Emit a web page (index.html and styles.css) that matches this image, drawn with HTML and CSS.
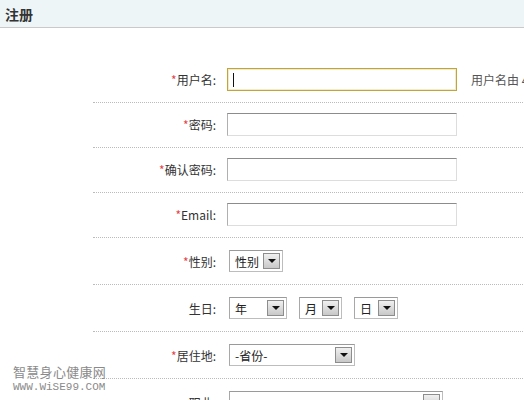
FILE: index.html
```html
<!DOCTYPE html>
<html lang="zh">
<head>
<meta charset="utf-8">
<title>注册</title>
<link rel="stylesheet" href="styles.css">
</head>
<body>
<div class="header"><h1 class="title">注册</h1></div>
<div class="form">
  <div class="row">
    <label class="label"><span class="req">*</span>用户名:</label>
    <div class="field"><span class="input focus"><span class="caret"></span></span><span class="hint">用户名由 4-16 个字符组成</span></div>
  </div>
  <div class="row">
    <label class="label"><span class="req">*</span>密码:</label>
    <div class="field"><span class="input"></span></div>
  </div>
  <div class="row">
    <label class="label"><span class="req">*</span>确认密码:</label>
    <div class="field"><span class="input"></span></div>
  </div>
  <div class="row">
    <label class="label"><span class="req">*</span>Email:</label>
    <div class="field"><span class="input"></span></div>
  </div>
  <div class="row row-sel">
    <label class="label"><span class="req">*</span>性别:</label>
    <div class="field">
      <span class="select w-gender"><span class="sel-text">性别</span><span class="btn"><span class="tri"></span></span></span>
    </div>
  </div>
  <div class="row row-sel">
    <label class="label">生日:</label>
    <div class="field">
      <span class="select w-year"><span class="sel-text">年</span><span class="btn"><span class="tri"></span></span></span>
      <span class="select w-month"><span class="sel-text">月</span><span class="btn"><span class="tri"></span></span></span>
      <span class="select w-day"><span class="sel-text">日</span><span class="btn"><span class="tri"></span></span></span>
    </div>
  </div>
  <div class="row row-sel">
    <label class="label"><span class="req">*</span>居住地:</label>
    <div class="field">
      <span class="select w-prov"><span class="sel-text">-省份-</span><span class="btn"><span class="tri"></span></span></span>
    </div>
  </div>
  <div class="row row-sel">
    <label class="label">职业:</label>
    <div class="field">
      <span class="select w-job"><span class="sel-text"></span><span class="btn"><span class="tri"></span></span></span>
    </div>
  </div>
</div>
<div class="watermark">
  <div class="wm-cn">智慧身心健康网</div>
  <div class="wm-en">WWW.WiSE99.COM</div>
</div>
</body>
</html>
```
FILE: styles.css
```css
html, body {
  margin: 0;
  padding: 0;
  background: #fff;
  overflow: hidden;
}
body {
  width: 524px;
  height: 400px;
  position: relative;
  font-family: "Noto Sans CJK SC", "DejaVu Sans", sans-serif;
  font-size: 12px;
  color: #333;
}
.header {
  height: 27px;
  background: #edf5f7;
  border-bottom: 1px solid #c9c9c9;
  display: flex;
  align-items: center;
  padding-left: 5px;
}
.title {
  margin: 0;
  font-size: 14px;
  font-weight: bold;
  color: #333;
  line-height: 1;
}
.form {
  margin-top: 30px;
  margin-left: 93px;
  width: 600px;
}
.row {
  display: flex;
  align-items: center;
  padding: 10px 0 11px;
  border-bottom: 1px dotted #bbb;
}
.row-sel {
  padding: 12px 0 12px;
}
.label {
  width: 123px;
  flex: none;
  text-align: right;
  color: #333;
  white-space: nowrap;
}
.req {
  color: #e8424a;
}
.field {
  margin-left: 11px;
  display: flex;
  align-items: center;
  gap: 12px;
  white-space: nowrap;
}
.input {
  display: block;
  box-sizing: border-box;
  width: 230px;
  height: 23px;
  border: 1px solid #ddd;
  border-top-color: #8c8c8c;
  border-left-color: #b0b0b0;
  background: #fff;
  position: relative;
}
.input.focus {
  border: 1px solid #c2a43e;
  box-shadow: inset 0 0 0 1px #f3ebc4;
}
.caret {
  position: absolute;
  left: 5px;
  top: 4px;
  width: 1px;
  height: 14px;
  background: #111;
}
.hint {
  margin-left: 2px;
  color: #555;
}
.select {
  display: flex;
  align-items: center;
  justify-content: space-between;
  box-sizing: border-box;
  height: 22px;
  border: 1px solid #bdbdbd;
  border-top-color: #9a9a9a;
  border-left-color: #a8a8a8;
  background: #fff;
  padding: 0 2px 0 5px;
}
.field .select:first-child {
  margin-left: 2px;
}
.sel-text {
  color: #222;
}
.btn {
  box-sizing: border-box;
  width: 17px;
  height: 16px;
  border: 1px solid #8d8d8d;
  background: linear-gradient(#f0f0f0, #c8c8c8);
  display: flex;
  align-items: center;
  justify-content: center;
}
.tri {
  width: 0;
  height: 0;
  border-left: 4px solid transparent;
  border-right: 4px solid transparent;
  border-top: 4px solid #111;
}
.w-gender { width: 54px; }
.w-year { width: 58px; }
.w-month { width: 43px; }
.w-day { width: 44px; }
.w-prov { width: 126px; }
.w-job { width: 214px; }
.watermark {
  position: absolute;
  left: 13px;
  top: 364px;
  color: #8a8a8a;
}
.wm-cn {
  font-size: 13px;
  line-height: 16px;
  letter-spacing: 0.3px;
}
.wm-en {
  font-family: "Liberation Mono", monospace;
  font-size: 11px;
  line-height: 12px;
  margin-top: 1px;
}
```
